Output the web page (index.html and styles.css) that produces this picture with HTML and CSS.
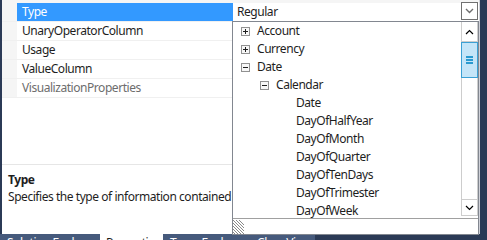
FILE: index.html
```html
<!DOCTYPE html>
<html lang="en">
<head>
    <meta charset="UTF-8">
    <title>Properties</title>
    <link rel="stylesheet" href="styles.css">
</head>
<body>

    <!-- Properties window -->
    <div class="props">
        <div class="grid">
            <div class="row selected">
                <div class="gutter"></div>
                <div class="name">Type</div>
                <div class="value">
                    <span class="value-text">Regular</span>
                    <span class="drop-btn">
                        <svg width="9" height="6" viewBox="0 0 9 6"><polyline points="1,1 4.5,4.5 8,1" fill="none" stroke="#6d6d6d" stroke-width="1.4"/></svg>
                    </span>
                </div>
            </div>
            <div class="row">
                <div class="gutter"></div>
                <div class="name">UnaryOperatorColumn</div>
                <div class="value"></div>
            </div>
            <div class="row">
                <div class="gutter"></div>
                <div class="name">Usage</div>
                <div class="value"></div>
            </div>
            <div class="row">
                <div class="gutter"></div>
                <div class="name">ValueColumn</div>
                <div class="value"></div>
            </div>
            <div class="row">
                <div class="gutter"></div>
                <div class="name muted">VisualizationProperties</div>
                <div class="value"></div>
            </div>
        </div>

        <!-- Description -->
        <div class="desc">
            <div class="desc-title">Type</div>
            <div class="desc-text">Specifies the type of information contained in the dimension.</div>
        </div>

        <!-- Dropdown popup for Type -->
        <div class="popup">
            <div class="popup-list">
                <div class="tree">
                    <div class="node lvl0"><span class="box plus"></span>Account</div>
                    <div class="node lvl0"><span class="box"></span>Currency</div>
                    <div class="node lvl0"><span class="box open"></span>Date</div>
                    <div class="node lvl1"><span class="box open"></span>Calendar</div>
                    <div class="node lvl2">Date</div>
                    <div class="node lvl2">DayOfHalfYear</div>
                    <div class="node lvl2">DayOfMonth</div>
                    <div class="node lvl2">DayOfQuarter</div>
                    <div class="node lvl2">DayOfTenDays</div>
                    <div class="node lvl2">DayOfTrimester</div>
                    <div class="node lvl2">DayOfWeek</div>
                </div>
                <div class="scrollbar">
                    <div class="sb-btn up">
                        <svg width="9" height="6" viewBox="0 0 9 6"><polyline points="1,5 4.5,1.5 8,5" fill="none" stroke="#000" stroke-width="1.2"/></svg>
                    </div>
                    <div class="sb-thumb">
                        <span></span><span></span><span></span>
                    </div>
                    <div class="sb-track"></div>
                    <div class="sb-btn down">
                        <svg width="9" height="6" viewBox="0 0 9 6"><polyline points="1,1 4.5,4.5 8,1" fill="none" stroke="#000" stroke-width="1.2"/></svg>
                    </div>
                </div>
            </div>
            <div class="popup-foot">
                <svg class="grip" width="11" height="15" viewBox="0 0 11 15">
                    <g stroke="#8a8a8a" stroke-width="1">
                        <line x1="0" y1="1" x2="11" y2="12"/>
                        <line x1="0" y1="4" x2="11" y2="15"/>
                        <line x1="0" y1="7" x2="8" y2="15"/>
                        <line x1="0" y1="10" x2="5" y2="15"/>
                        <line x1="0" y1="13" x2="2" y2="15"/>
                        <line x1="3" y1="1" x2="11" y2="9"/>
                        <line x1="6" y1="1" x2="11" y2="6"/>
                    </g>
                </svg>
            </div>
        </div>
    </div>

    <!-- Tool window tabs -->
    <div class="tabs">
        <div class="tab t-solution">Solution Explorer</div>
        <div class="tab active t-props">Properties</div>
        <div class="tab t-team">Team Explorer</div>
        <div class="tab t-class">Class View</div>
    </div>

</body>
</html>
```

FILE: styles.css
```css
body {
    margin: 0;
    width: 487px;
    height: 240px;
    overflow: hidden;
    background-color: #2b3a56;
    font-family: 'Noto Sans', sans-serif;
    font-size: 12px;
    letter-spacing: -0.45px;
    color: #1e1e1e;
}

/* Properties window */
.props {
    position: relative;
    margin-left: 2px;
    width: 477px;
    height: 234px;
    background-color: #ffffff;
    border-right: 1px solid #cfd1d8;
    display: flex;
    flex-direction: column;
}

/* Grid */
.grid {
    background-color: #f5f5f5;
    padding-top: 2px;
    border-bottom: 1px solid #f0f0f0;
}

.row {
    display: grid;
    grid-template-columns: 15px 216px 1fr;
    height: 19px;
    border-top: 1px solid #f0f0f0;
    box-sizing: border-box;
}

.row .name {
    background-color: #ffffff;
    border-right: 1px solid #f0f0f0;
    padding-left: 5px;
    line-height: 18px;
    white-space: nowrap;
}

.row .name.muted {
    color: #6d6d6d;
}

.row.selected {
    border-top-color: #f5f5f5;
}

.row.selected .name {
    background-color: #3399ff;
    border-right-color: #3399ff;
    color: #ffffff;
}

.row .value {
    background-color: #ffffff;
    display: flex;
    align-items: flex-start;
    justify-content: space-between;
}

.value-text {
    padding-left: 4px;
    line-height: 18px;
}

.drop-btn {
    width: 15px;
    height: 16px;
    border: 1px solid #707070;
    margin-right: 1px;
    margin-top: -1px;
    display: flex;
    justify-content: center;
    align-items: center;
    background-color: #ffffff;
}

/* Description */
.desc {
    margin-top: auto;
    height: 63px;
    border-top: 1px solid #e6e6e6;
    padding: 6px 6px 0;
    white-space: nowrap;
    line-height: 17px;
}

.desc-title {
    font-weight: bold;
}

/* Popup */
.popup {
    position: absolute;
    left: 230px;
    top: 21px;
    width: 247px;
    height: 214px;
    box-sizing: border-box;
    border: 1px solid #828790;
    background-color: #ffffff;
    display: flex;
    flex-direction: column;
    z-index: 2;
}

.popup-list {
    height: 196px;
    display: flex;
    border-bottom: 1px solid #a0a0a0;
}

.tree {
    flex: 1;
    overflow: hidden;
}

.node {
    height: 18px;
    line-height: 18px;
    display: flex;
    align-items: center;
    white-space: nowrap;
}

.node.lvl0 { padding-left: 8px; }
.node.lvl1 { padding-left: 27px; }
.node.lvl2 { padding-left: 63px; }

.box {
    position: relative;
    width: 7px;
    height: 7px;
    border: 1px solid #919191;
    margin-right: 7px;
    background-color: #f7f7f7;
}

.box::before,
.box::after {
    content: '';
    position: absolute;
    background-color: #1e1e1e;
}

.box::before {
    left: 1px;
    top: 3px;
    width: 5px;
    height: 1px;
}

.box::after {
    left: 3px;
    top: 1px;
    width: 1px;
    height: 5px;
}

.box.open::after {
    display: none;
}

/* Scrollbar */
.scrollbar {
    width: 15px;
    border-left: 1px solid #cdcdcd;
    border-right: 1px solid #cdcdcd;
    margin-bottom: 2px;
    display: flex;
    flex-direction: column;
}

.sb-btn {
    display: flex;
    justify-content: center;
    align-items: center;
}

.sb-btn.up {
    height: 19px;
    border-bottom: 1px solid #cdcdcd;
}

.sb-btn.down {
    height: 15px;
    border-top: 1px solid #cdcdcd;
    border-bottom: 1px solid #cdcdcd;
}

.sb-thumb {
    height: 34px;
    margin: 0 -1px;
    border: 1px solid #3ba0d4;
    background-color: #c4e5f8;
    display: flex;
    flex-direction: column;
    align-items: center;
    justify-content: center;
    gap: 1px;
}

.sb-thumb span {
    width: 7px;
    height: 2px;
    background-color: #2a9ad0;
}

.sb-track {
    flex: 1;
}

.popup-foot {
    flex: 1;
}

.grip {
    display: block;
}

/* Tabs */
.tabs {
    display: flex;
    height: 6px;
    overflow: hidden;
}

.tab {
    line-height: 14px;
    padding-top: 2px;
    color: #ffffff;
    background-color: #465a7c;
    padding-left: 7px;
    white-space: nowrap;
    overflow: hidden;
    box-sizing: border-box;
}

.tab.active {
    background-color: #ffffff;
    color: #1e1e1e;
}

.t-solution { width: 100px; }
.t-props { width: 63px; padding-left: 6px; }
.t-team { width: 87px; }
.t-class { width: 65px; }
```
